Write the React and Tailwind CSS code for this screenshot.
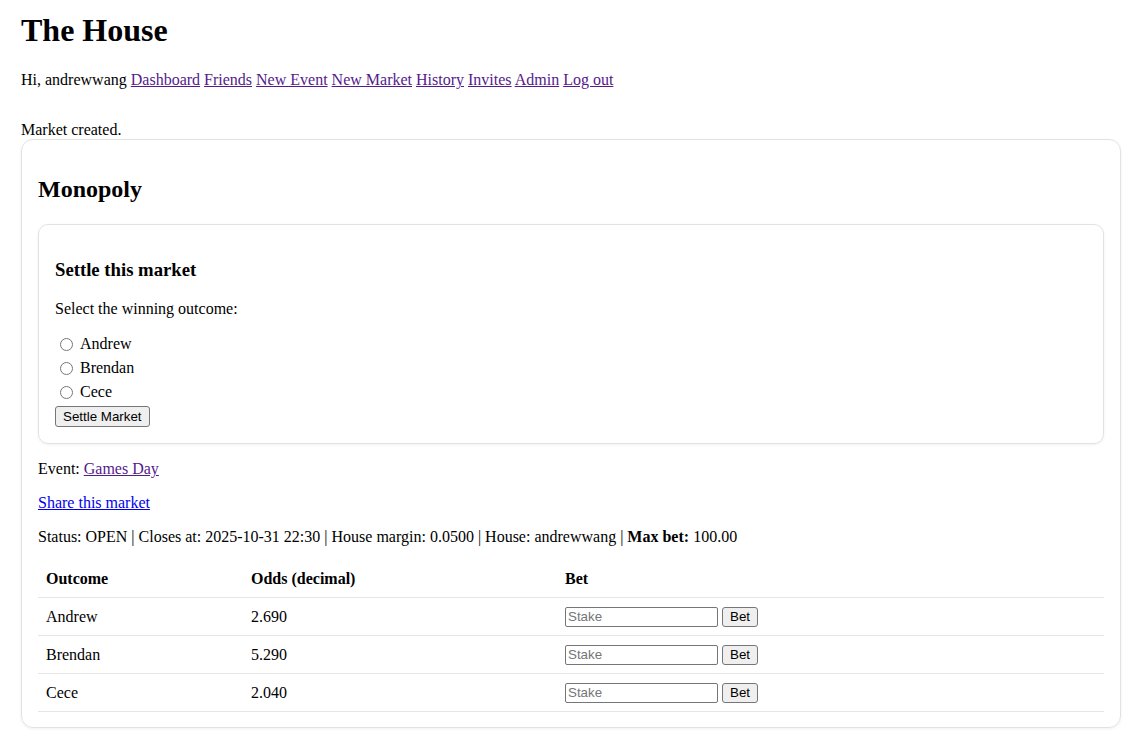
import { useState } from "react";

const outcomes = [
  { name: "Andrew", odds: "2.690" },
  { name: "Brendan", odds: "5.290" },
  { name: "Cece", odds: "2.040" },
];

const navLinks = ["Dashboard", "Friends", "New Event", "New Market", "History", "Invites", "Admin", "Log out"];

const btn =
  "bg-[#efefef] border border-[#767676] rounded-[3px] px-[7px] text-[13.33px] leading-none text-black font-['Liberation_Sans',Arial,sans-serif]";

const App = () => {
  const [winner, setWinner] = useState("");
  const [stakes, setStakes] = useState({});

  return (
    <div className="min-h-screen bg-white text-black font-['Liberation_Serif','Times_New_Roman',serif] text-[16px] leading-[18px] pl-[21px] pt-[12px] pb-[20px]">
      <h1 className="text-[32px] font-bold leading-[37px]">The House</h1>

      {/* NAV */}
      <p className="mt-[22px]">
        Hi, andrewwang{" "}
        {navLinks.map((l, i) => (
          <span key={l}>
            <a href="#" className="text-[#551a8b] underline">
              {l}
            </a>
            {i < navLinks.length - 1 ? " " : ""}
          </span>
        ))}
      </p>

      <p className="mt-[32px]">Market created.</p>

      {/* MARKET CARD */}
      <div className="w-[1100px] border border-[#e2e2e2] rounded-[12px] shadow-[0_1px_3px_rgba(0,0,0,0.06)] px-[16px] pt-[16px] pb-[15px]">
        <h2 className="text-[24px] font-bold leading-[28px] mt-[19px]">Monopoly</h2>

        {/* SETTLE */}
        <div className="mt-[21px] border border-[#e2e2e2] rounded-[10px] shadow-[0_1px_3px_rgba(0,0,0,0.06)] p-[16px]">
          <h3 className="text-[18.72px] font-bold leading-[22px] mt-[18px]">Settle this market</h3>
          <p className="mt-[19px]">Select the winning outcome:</p>
          <div className="mt-[14px] flex flex-col">
            {outcomes.map((o) => (
              <label key={o.name} className="h-[24px] flex items-center">
                <input
                  type="radio"
                  name="winner"
                  checked={winner === o.name}
                  onChange={() => setWinner(o.name)}
                  className="ml-[5px] mr-[7px] w-[13px] h-[13px]"
                />
                {o.name}
              </label>
            ))}
          </div>
          <button type="button" className={`${btn} mt-[2px] h-[21px]`}>
            Settle Market
          </button>
        </div>

        <p className="mt-[16px]">
          Event:{" "}
          <a href="#" className="text-[#551a8b] underline">
            Games Day
          </a>
        </p>
        <p className="mt-[16px]">
          <a href="#" className="text-[#0000ee] underline">
            Share this market
          </a>
        </p>
        <p className="mt-[16px]">
          Status: OPEN | Closes at: 2025-10-31 22:30 | House margin: 0.0500 | House: andrewwang |{" "}
          <b>Max bet:</b> 100.00
        </p>

        {/* OUTCOMES TABLE */}
        <div className="mt-[14px]">
          <div className="grid grid-cols-[205px_314px_1fr] h-[38px] items-center border-b border-[#e6e6e6] font-bold">
            <div className="px-[8px]">Outcome</div>
            <div className="px-[8px]">Odds (decimal)</div>
            <div className="px-[8px]">Bet</div>
          </div>
          {outcomes.map((o) => (
            <div
              key={o.name}
              className="grid grid-cols-[205px_314px_1fr] h-[38px] items-center border-b border-[#e6e6e6]"
            >
              <div className="px-[8px]">{o.name}</div>
              <div className="px-[8px]">{o.odds}</div>
              <div className="px-[8px] flex items-center gap-[4px]">
                <input
                  type="text"
                  placeholder="Stake"
                  value={stakes[o.name] || ""}
                  onChange={(e) => setStakes({ ...stakes, [o.name]: e.target.value })}
                  className="w-[153px] h-[20px] border border-[#767676] rounded-[2px] px-[2px] text-[13.33px] font-['Liberation_Sans',Arial,sans-serif] placeholder:text-[#757575] outline-none"
                />
                <button type="button" className={`${btn} h-[20px]`}>
                  Bet
                </button>
              </div>
            </div>
          ))}
        </div>
      </div>
    </div>
  );
};

export default App;
